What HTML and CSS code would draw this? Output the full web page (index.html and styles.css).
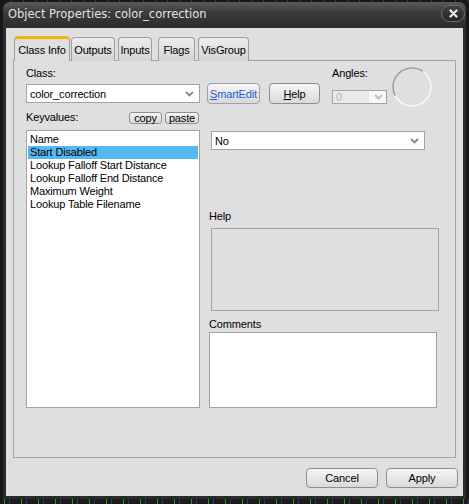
FILE: index.html
```html
<!DOCTYPE html>
<html lang="en">
<head>
  <meta charset="UTF-8">
  <title>Object Properties: color_correction</title>
  <link rel="stylesheet" href="styles.css">
</head>
<body>
  <div class="desktop">
    <div class="window">
      <div class="titlebar">
        <span class="title">Object Properties: color_correction</span>
        <button class="close" type="button">
          <svg width="9" height="9" viewBox="0 0 9 9"><path d="M1.5 1.5 L7.5 7.5 M7.5 1.5 L1.5 7.5" stroke="#ececec" stroke-width="2.2" stroke-linecap="round"/></svg>
        </button>
      </div>

      <div class="client">
        <div class="tabs">
          <div class="tab active tab-class">Class Info</div>
          <div class="tab tab-outputs">Outputs</div>
          <div class="tab tab-inputs">Inputs</div>
          <div class="tab tab-flags">Flags</div>
          <div class="tab tab-vis">VisGroup</div>
        </div>

        <div class="panel">
          <!-- class selector, help buttons, angle control -->
          <div class="top">
            <div class="class-field">
              <label class="lbl">Class:</label>
              <div class="combo">
                <span class="value">color_correction</span>
                <svg class="arrow" width="9" height="6" viewBox="0 0 9 6"><path d="M1 1 L4.5 4.5 L8 1" fill="none" stroke="#8a8a8a" stroke-width="1.8"/></svg>
              </div>
            </div>
            <button class="btn smartedit" type="button"><u>S</u>martEdit</button>
            <button class="btn help-btn" type="button"><u>H</u>elp</button>
            <div class="angles">
              <label class="lbl">Angles:</label>
              <div class="combo disabled">
                <span class="value">0</span>
                <svg class="arrow" width="9" height="6" viewBox="0 0 9 6"><path d="M1 1 L4.5 4.5 L8 1" fill="none" stroke="#bdbdbd" stroke-width="1.8"/></svg>
              </div>
            </div>
            <svg class="dial" width="40" height="40" viewBox="0 0 40 40">
              <circle cx="20" cy="20" r="19" fill="none" stroke="#f7f7f7" stroke-width="1.6"/>
              <path d="M3.07 28.6 A19 19 0 0 1 30.9 4.44" fill="none" stroke="#9a9a9a" stroke-width="1.6"/>
              <circle cx="20" cy="20" r="0.8" fill="#f4f4f4"/>
            </svg>
          </div>

          <div class="body">
            <div class="left">
              <div class="kv-head">
                <label class="lbl">Keyvalues:</label>
                <button class="mini copy" type="button">copy</button>
                <button class="mini" type="button">paste</button>
              </div>
              <ul class="keylist">
                <li>Name</li>
                <li class="selected">Start Disabled</li>
                <li>Lookup Falloff Start Distance</li>
                <li>Lookup Falloff End Distance</li>
                <li>Maximum Weight</li>
                <li>Lookup Table Filename</li>
              </ul>
            </div>

            <div class="right">
              <div class="combo value-combo">
                <span class="value">No</span>
                <svg class="arrow" width="9" height="6" viewBox="0 0 9 6"><path d="M1 1 L4.5 4.5 L8 1" fill="none" stroke="#8a8a8a" stroke-width="1.8"/></svg>
              </div>
              <label class="lbl help-lbl">Help</label>
              <div class="help-box"></div>
              <label class="lbl comments-lbl">Comments</label>
              <textarea class="comments"></textarea>
            </div>
          </div>
        </div>

        <div class="footer">
          <button class="btn wide" type="button">Cancel</button>
          <button class="btn wide" type="button">Apply</button>
        </div>
      </div>
    </div>
  </div>
</body>
</html>
```

FILE: styles.css
```css
* {
  box-sizing: border-box;
}
body {
  margin: 0;
  background: #161616;
  font-family: "Liberation Sans", Arial, sans-serif;
  font-size: 11px;
  letter-spacing: -0.15px;
  color: #000;
}
button, textarea {
  font: inherit;
  letter-spacing: inherit;
  color: inherit;
}

/* dark desktop behind the dialog */
.desktop {
  width: 469px;
  height: 504px;
  padding: 2px 0 0 3px;
  overflow: hidden;
  background:
    repeating-linear-gradient(90deg, transparent 0 11px, #3c3c3c 11px 12px) top / 100% 2px no-repeat,
    repeating-linear-gradient(90deg, #1a1a1a 0 4px, #1e9a2e 4px 5px, #1a1a1a 5px 9px, #2a3a6a 9px 10px, #1a1a1a 10px 17px) bottom / 100% 5px no-repeat,
    #171717;
}

.window {
  width: 463px;
  height: 497px;
  padding: 0 3px 3px;
  display: flex;
  flex-direction: column;
  border-radius: 7px 7px 0 0;
  background: linear-gradient(#5c5c5c, #3c3c3c 10px, #2c2c2c 26px, #2a2a2a);
}
.titlebar {
  height: 26px;
  display: flex;
  align-items: flex-start;
  padding-left: 2px;
}
.title {
  margin-top: 5px;
  font-family: "DejaVu Sans", sans-serif;
  font-size: 11.5px;
  letter-spacing: 0;
  color: #e4e4e4;
}
.close {
  margin: 3px -2px 0 auto;
  width: 24px;
  height: 17px;
  padding: 0;
  display: flex;
  align-items: center;
  justify-content: center;
  border: 1px solid #6e6e6e;
  border-radius: 9px;
  background: linear-gradient(#424242, #262626);
}

.client {
  flex: 1;
  background: #dfdfdf;
  padding: 8px 7px 0 7px;
}

/* tab strip */
.tabs {
  display: flex;
  align-items: flex-end;
  height: 25px;
  margin-bottom: -1px;
  padding-left: 1px;
}
.tab {
  height: 24px;
  display: flex;
  align-items: center;
  justify-content: center;
  border: 1px solid #9e9e9e;
  border-bottom: none;
  border-radius: 4px 4px 0 0;
  background: linear-gradient(#ededed, #d3d3d3);
  padding-top: 1px;
}
.tab.active {
  position: relative;
  z-index: 2;
  height: 25px;
  background: #dfdfdf;
  border-top: 3px solid #f4b400;
  padding-top: 0;
}
.tab-class { width: 56px; }
.tab-outputs { width: 44px; margin-left: 1px; }
.tab-inputs { width: 34px; margin-left: 3px; }
.tab-flags { width: 37px; margin-left: 6px; }
.tab-vis { width: 51px; margin-left: 3px; }

.panel {
  height: 398px;
  border: 1px solid #a3a3a3;
  padding-left: 12px;
}

.lbl {
  display: block;
  line-height: 13px;
}

/* drop-down boxes */
.combo {
  display: flex;
  align-items: center;
  height: 19px;
  padding: 0 5px 0 3px;
  border: 1px solid #a3a3a3;
  background: #fff;
}
.combo .value {
  flex: 1;
}
.combo.disabled {
  height: 14px;
  padding-right: 3px;
  background: linear-gradient(90deg, #e9e9e9 0 36px, #f7f7f7 36px);
  color: #b4b4b4;
}

.btn {
  height: 21px;
  padding: 0;
  border: 1px solid #8e8e8e;
  border-radius: 4px;
  background: linear-gradient(#f6f6f6, #d9d9d9);
}
.btn u {
  text-decoration: underline;
}

.top {
  display: flex;
  align-items: flex-start;
  height: 46px;
}
.class-field {
  width: 174px;
  padding-top: 6px;
}
.class-field .combo {
  margin-top: 4px;
}
.smartedit {
  width: 53px;
  margin: 22px 0 0 7px;
  color: #1e5fd0;
  border-color: #98a2b0;
}
.help-btn {
  width: 51px;
  margin: 22px 0 0 9px;
}
.angles {
  width: 55px;
  margin-left: 12px;
  padding-top: 6px;
}
.angles .combo {
  margin-top: 10px;
}
.dial {
  margin: 6px 0 0 5px;
}

.body {
  display: flex;
}
.left {
  width: 174px;
}
.kv-head {
  display: flex;
  align-items: flex-start;
  height: 23px;
  padding-right: 1px;
}
.kv-head .lbl {
  margin-top: 4px;
}
.mini {
  height: 12px;
  margin-top: 5px;
  padding: 0 2px;
  line-height: 10px;
  border: 1px solid #8e8e8e;
  border-radius: 3px;
  background: linear-gradient(#f6f6f6, #d9d9d9);
}
.mini.copy {
  width: 33px;
  margin-left: auto;
}
.mini + .mini {
  width: 34px;
  margin-left: 3px;
}

.keylist {
  list-style: none;
  margin: 0;
  height: 278px;
  padding: 2px 1px;
  border: 1px solid #a3a3a3;
  background: #fff;
}
.keylist li {
  height: 13px;
  line-height: 13px;
  padding-left: 2px;
  white-space: nowrap;
}
.keylist li.selected {
  background: #56b8f2;
}

.right {
  width: 230px;
  margin-left: 9px;
}
.value-combo {
  width: 214px;
  margin: 24px 0 0 2px;
}
.help-lbl {
  margin-top: 60px;
}
.help-box {
  width: 228px;
  height: 83px;
  margin: 5px 0 0 2px;
  border: 1px solid #a3a3a3;
}
.comments-lbl {
  margin-top: 7px;
}
.comments {
  display: block;
  width: 228px;
  height: 76px;
  margin-top: 1px;
  border: 1px solid #a3a3a3;
  resize: none;
}

.footer {
  display: flex;
  justify-content: flex-end;
  gap: 8px;
  margin: 10px -2px 0 0;
}
.btn.wide {
  width: 72px;
  height: 20px;
}
```
